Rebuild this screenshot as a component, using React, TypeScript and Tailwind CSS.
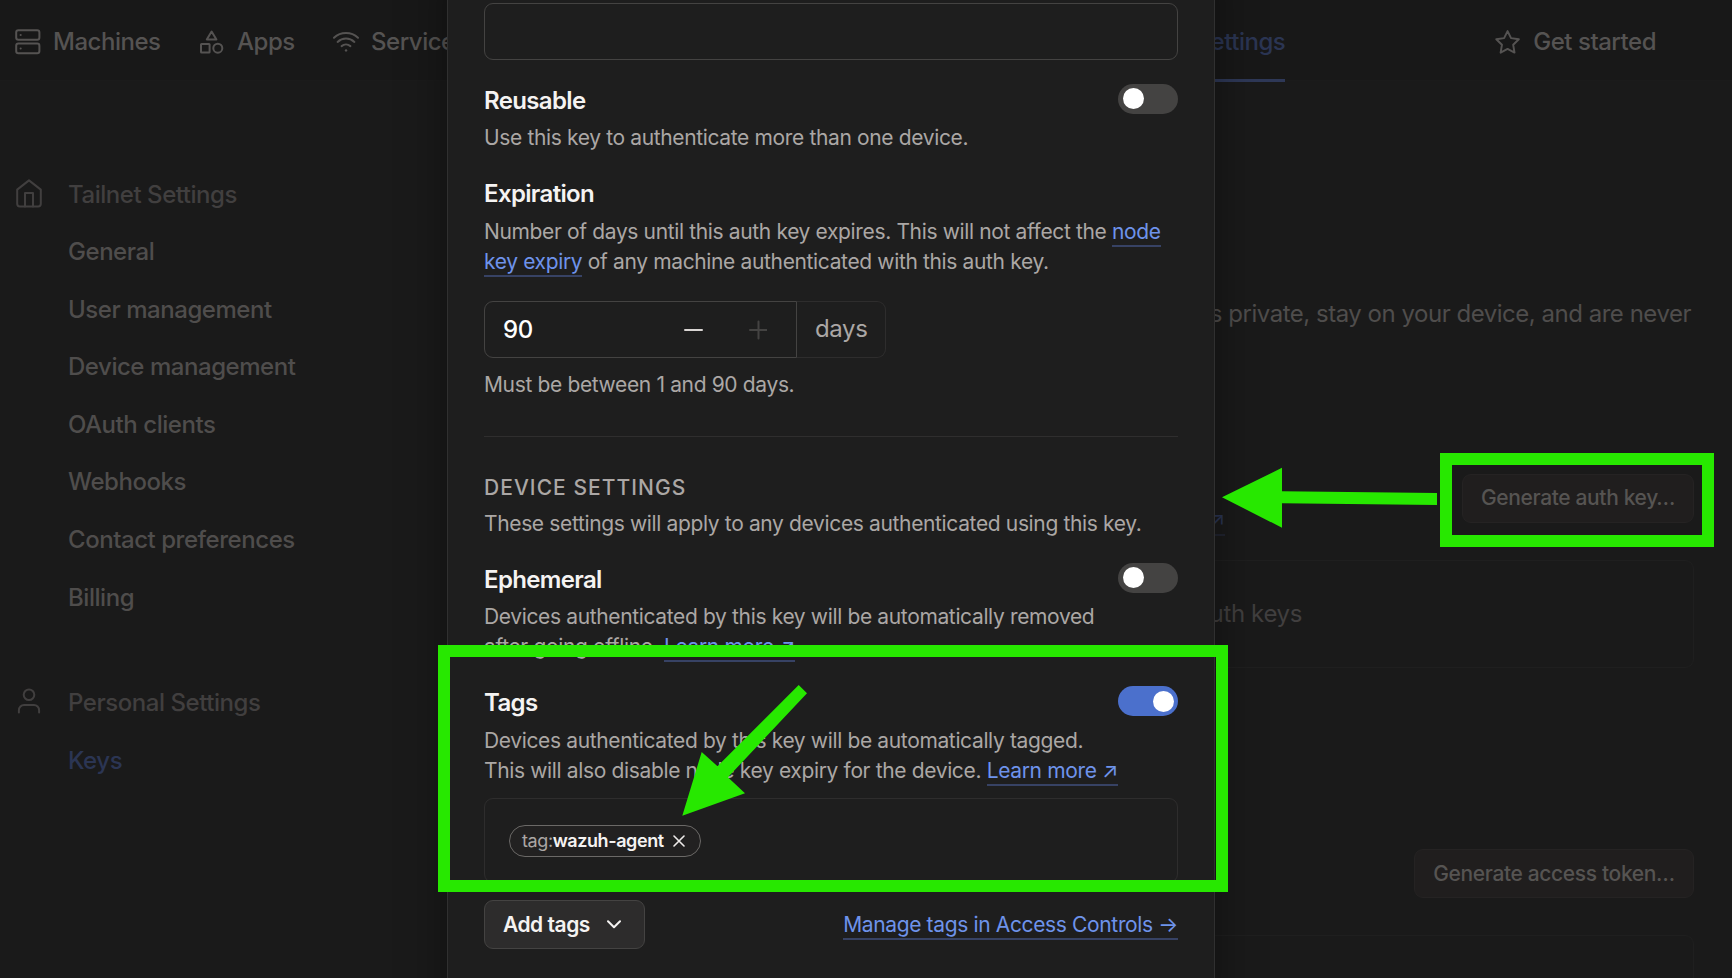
import React from "react";

const sidebarItems = [
  "General",
  "User management",
  "Device management",
  "OAuth clients",
  "Webhooks",
  "Contact preferences",
  "Billing",
];

function ServerIcon() {
  return (
    <svg className="h-[26px] w-[26px]" viewBox="0 0 26 26" fill="none" stroke="currentColor" strokeWidth="2">
      <rect x="1.2" y="1.2" width="23.2" height="9.6" rx="2.2" />
      <rect x="1.2" y="14.6" width="23.2" height="9.6" rx="2.2" />
      <path d="M5.6 6h.1M5.6 19.4h.1" strokeLinecap="round" />
    </svg>
  );
}

function ShapesIcon() {
  return (
    <svg className="h-[24px] w-[24px]" viewBox="0 0 24 24" fill="none" stroke="currentColor" strokeWidth="2" strokeLinejoin="round">
      <path d="M11.6 1.5 6.8 9.5h9.6Z" />
      <rect x="1" y="14" width="8.6" height="8.6" rx="0.6" />
      <circle cx="17.8" cy="18.2" r="4.5" />
    </svg>
  );
}

function WifiIcon() {
  return (
    <svg className="h-[26px] w-[26px]" viewBox="0 0 26 26" fill="none" stroke="currentColor" strokeWidth="2" strokeLinecap="round">
      <path d="M1 8.8a17.5 17.5 0 0 1 24 0" />
      <path d="M4.6 12.9a12.4 12.4 0 0 1 16.8 0" />
      <path d="M8.6 17.1a7 7 0 0 1 8.8 0" />
      <path d="M13 21.4h.1" strokeWidth="2.4" />
    </svg>
  );
}

function StarIcon() {
  return (
    <svg className="mb-px h-[26px] w-[26px]" viewBox="0 0 24 24" fill="none" stroke="currentColor" strokeWidth="1.8" strokeLinecap="round" strokeLinejoin="round">
      <path d="M11.600 1.900l3.200 6.500 7.200 1.100-5.200 5.100 1.200 7.200-6.400-3.400-6.400 3.400 1.200-7.200L1.200 9.500l7.200-1.100z" />
    </svg>
  );
}

function HomeIcon() {
  return (
    <svg className="mb-[2px] h-[29px] w-[26px] shrink-0" viewBox="0 0 26 29" fill="none" stroke="currentColor" strokeWidth="2" strokeLinecap="round" strokeLinejoin="round">
      <path d="M1.2 10.6 13 1.4l11.8 9.2v14.2a2.6 2.6 0 0 1-2.6 2.6H3.8a2.6 2.6 0 0 1-2.6-2.6Z" />
      <path d="M9 27.4V14h8v13.4" />
    </svg>
  );
}

function UserIcon() {
  return (
    <svg className="mb-[4px] h-[26px] w-[26px] shrink-0" viewBox="0 0 26 26" fill="none" stroke="currentColor" strokeWidth="2" strokeLinecap="round">
      <circle cx="13" cy="6.8" r="5.3" />
      <path d="M2.9 24.6v-2.4a5.2 5.2 0 0 1 5.2-5.2h9.8a5.2 5.2 0 0 1 5.2 5.2v2.4" />
    </svg>
  );
}

function Toggle({ on = false }: { on?: boolean }) {
  return on ? (
    <div className="mt-[2px] flex h-[30px] w-[60px] shrink-0 items-start justify-end rounded-full bg-[#4b70cc] pt-[5px] pr-[4px]">
      <div className="h-[21px] w-[21px] rounded-full bg-white" />
    </div>
  ) : (
    <div className="mt-[2px] flex h-[30px] w-[60px] shrink-0 items-start rounded-full bg-[#444342] pt-[4px] pl-[5px]">
      <div className="h-[21px] w-[21px] rounded-full bg-white" />
    </div>
  );
}

function Link({ children }: { children: React.ReactNode }) {
  return <a className="border-b-2 border-[#374264] pb-px text-[#6e93eb]">{children}</a>;
}

function Header() {
  return (
    <header className="flex h-[81px] shrink-0 items-start border-b border-[#1b1b1b] bg-[#181818] text-[24px] leading-[36px] font-medium tracking-[-0.02em] text-[#555352]">
      <div className="mt-[24px] ml-[15px] flex h-[36px] w-[185px] items-center gap-[12px]">
        <ServerIcon />
        Machines
      </div>
      <div className="mt-[24px] flex h-[36px] w-[133px] items-center gap-[13px]">
        <ShapesIcon />
        Apps
      </div>
      <div className="mt-[24px] flex h-[36px] items-center gap-[12px]">
        <WifiIcon />
        Services
      </div>
      <div className="mt-[24px] ml-auto h-[58px] border-b-[3px] border-[#2e3857] text-[#2b3553]">Settings</div>
      <div className="mt-[24px] mr-[76px] ml-[210px] flex h-[36px] items-center gap-[12px]">
        <StarIcon />
        Get started
      </div>
    </header>
  );
}

function Sidebar() {
  return (
    <nav className="w-[470px] pt-[84.5px] pl-[16px] text-[24px] leading-[57.6px] font-medium tracking-[-0.019em] text-[#4f4d4c]">
      <div className="flex items-center gap-[26px] text-[#413f3f]">
        <HomeIcon />
        Tailnet Settings
      </div>
      {sidebarItems.map((item) => (
        <div key={item} className="pl-[52px]">
          {item}
        </div>
      ))}
      <div className="mt-[48px] flex items-center gap-[26px] text-[#413f3f]">
        <UserIcon />
        Personal Settings
      </div>
      <div className="pl-[52px] text-[#2b3553]">Keys</div>
    </nav>
  );
}

function KeysPage() {
  return (
    <main className="flex flex-1 flex-col pr-[38px] text-[24px] tracking-[-0.015em]">
      <p className="mt-[215px] pr-[3px] text-right leading-[36px] tracking-[-0.02em] text-[#4f4d4c]">
        s private, stay on your device, and are never
      </p>
      <div className="mt-[142px] flex justify-between">
        <div className="flex w-[755px] justify-end pt-[33px]">
          <span className="h-[29px] border-b-2 border-[#212430] text-[21px] leading-[26px] text-[#2b3553]">↗</span>
        </div>
        <button className="h-[49px] w-[232px] rounded-[9px] border border-[#252323] bg-[#201e1e] pb-px text-[21px] font-medium text-[#565452]">
          Generate auth key…
        </button>
      </div>
      <div className="mt-[24px] flex h-[108px] items-center justify-center rounded-[9px] border border-[#1f1f1f]">
        <span className="w-[440px] text-right text-[#413f3f]">auth keys</span>
      </div>
      <div className="mt-[181px] flex justify-end">
        <button className="h-[49px] w-[280px] rounded-[9px] border border-[#252323] bg-[#201e1e] text-[21px] font-medium text-[#565452]">
          Generate access token…
        </button>
      </div>
      <div className="mt-[37px] h-[80px] shrink-0 rounded-[9px] border border-[#1f1f1f]" />
    </main>
  );
}

function SettingRow({ title, on, children }: { title: string; on?: boolean; children: React.ReactNode }) {
  return (
    <section className="flex justify-between">
      <div className="w-0 flex-1 pt-px">
        <h3 className="text-[24px] leading-[36px] font-semibold tracking-[-0.027em] text-[#f5f3f2]">{title}</h3>
        <p className={on ? "mt-[5px]" : "mt-[4px]"}>{children}</p>
      </div>
      <Toggle on={on} />
    </section>
  );
}

function Modal() {
  return (
    <div className="absolute top-[-40px] left-[447px] flex h-[1060px] w-[768px] flex-col border border-[#303030] bg-[#1e1e1e] px-[36px] pt-[42px] text-[21px] leading-[30px] tracking-[-0.017em] whitespace-nowrap text-[#aba7a5] shadow-[0_0_45px_rgba(0,0,0,0.4)]">
      <div className="h-[57px] shrink-0 rounded-[9px] border border-[#444342]" />
      <div className="mt-[22px]">
        <SettingRow title="Reusable">Use this key to authenticate more than one device.</SettingRow>
      </div>
      <h3 className="mt-[23px] text-[24px] leading-[36px] font-semibold tracking-[-0.027em] text-[#f5f3f2]">Expiration</h3>
      <p className="mt-[5px]">
        Number of days until this auth key expires. This will not affect the <Link>node</Link>
        <br />
        <Link>key expiry</Link> of any machine authenticated with this auth key.
      </p>
      <div className="mt-[24px] flex h-[57px] shrink-0 text-[24px]">
        <div className="flex w-[313px] items-center rounded-l-[9px] border border-[#444342] pl-[18px] font-medium text-white">
          <span className="w-[180px]">90</span>
          <svg className="h-[20px] w-[84px]" viewBox="0 0 84 20" strokeWidth="2" strokeLinecap="round">
            <path d="M2 10h17" stroke="#d9d5d3" />
            <path d="M67 10h16.500M75.500 1.500v17" stroke="#444342" />
          </svg>
        </div>
        <div className="flex w-[89px] items-center rounded-r-[9px] border border-l-0 border-[#2e2d2d] pb-px pl-[18px]">days</div>
      </div>
      <p className="mt-[12px]">Must be between 1 and 90 days.</p>
      <div className="mt-[36px] h-px shrink-0 bg-[#2f2e2e]" />
      <h2 className="mt-[36px] font-medium tracking-[0.05em]">DEVICE SETTINGS</h2>
      <p className="mt-[6px]">These settings will apply to any devices authenticated using this key.</p>
      <div className="mt-[22px]">
        <SettingRow title="Ephemeral">
          Devices authenticated by this key will be automatically removed
          <br />
          after going offline. <Link>Learn more ↗</Link>
        </SettingRow>
      </div>
      <div className="mt-[22px]">
        <SettingRow title="Tags" on>
          Devices authenticated by this key will be automatically tagged.
          <br />
          This will also disable node key expiry for the device. <Link>Learn more ↗</Link>
        </SettingRow>
      </div>
      <div className="mt-[12px] flex h-[85px] shrink-0 items-start rounded-[9px] border border-[#2e2d2d] pt-[26px] pl-[24px]">
        <div className="flex h-[32px] w-[192px] items-center rounded-full border border-[#6b6967] bg-[#222121] pl-[12px] text-[18px] tracking-[-0.023em]">
          <span className="text-[#aba7a5]">tag:</span>
          <span className="font-semibold text-[#f5f3f2]">wazuh-agent</span>
          <svg className="ml-[9px] h-[12px] w-[12px]" viewBox="0 0 12 12" stroke="#eeebea" strokeWidth="1.6" strokeLinecap="round">
            <path d="M1 1l10 10M11 1 1 11" />
          </svg>
        </div>
      </div>
      <div className="mt-[17px] flex items-center justify-between">
        <button className="flex h-[49px] w-[161px] items-center rounded-[9px] border border-[#444342] bg-[#2d2c2c] pl-[18px] font-semibold tracking-[-0.023em] text-[#f5f3f2]">
          Add tags
          <svg className="ml-[17px] h-[9px] w-[14px]" viewBox="0 0 14 9" fill="none" stroke="currentColor" strokeWidth="2" strokeLinecap="round" strokeLinejoin="round">
            <path d="M1 1.200l6 6 6-6" />
          </svg>
        </button>
        <span>
          <Link>Manage tags in Access Controls →</Link>
        </span>
      </div>
    </div>
  );
}

export default function App() {
  return (
    <div className="relative flex h-[978px] w-[1732px] flex-col overflow-hidden bg-[#1a1a1a] font-['Inter','Liberation_Sans',sans-serif]">
      <Header />
      <div className="flex flex-1">
        <Sidebar />
        <KeysPage />
      </div>
      <Modal />
      <div className="absolute top-[645px] left-[438px] h-[247px] w-[790px] border-[12px] border-[#27e800]" />
      <div className="absolute top-[453px] left-[1440px] h-[94px] w-[274px] border-[12px] border-[#27e800]" />
      <svg className="absolute inset-0 h-[978px] w-[1732px]" viewBox="0 0 1732 978" fill="#27e800">
        <path d="M1222 497.300 1282 467.800V491.300L1437 493V505L1282 503.300V527.700Z" />
        <path d="M682.300 815.700 701.700 752 717.500 766.200 798.700 685 807 693.300 727.900 777.300 745 793.300Z" />
      </svg>
    </div>
  );
}
